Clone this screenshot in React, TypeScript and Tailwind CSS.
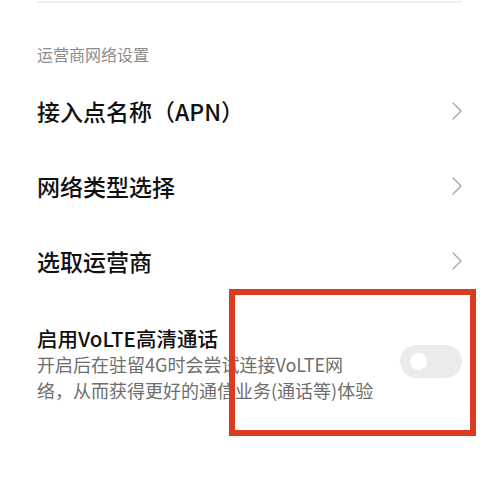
const Chevron = () => (
  <svg width="10" height="18" viewBox="0 0 10 18" fill="none" className="shrink-0">
    <polyline points="1,1 9,9 1,17" stroke="#a3a3a3" strokeWidth="1.3" strokeLinecap="round" strokeLinejoin="round" />
  </svg>
);

const NavRow = ({ title }: { title: string }) => (
  <div className="flex h-[75px] items-center justify-between">
    <span className="text-[23px] leading-[26px] font-medium text-[#111]">{title}</span>
    <Chevron />
  </div>
);

export default function App() {
  return (
    <div
      className="relative h-[478px] w-[499px] overflow-hidden bg-white"
      style={{ fontFamily: '"Noto Sans CJK SC", "Noto Sans", sans-serif' }}
    >
      <div className="px-[37px] pt-[1px]">
        <div className="h-[2px] bg-[#efefef]" />

        <div className="mt-[43px] mb-[11px] text-[16px] leading-[16px] text-[#8c8c8c]">运营商网络设置</div>

        <NavRow title="接入点名称（APN）" />
        <NavRow title="网络类型选择" />
        <NavRow title="选取运营商" />

        <div className="mt-[27px] flex items-center justify-between">
          <div>
            <div className="text-[20.5px] leading-[26px] font-medium text-[#111]">启用VoLTE高清通话</div>
            <div className="text-[18px] leading-[26px] text-[#6e6e6e]">
              开启后在驻留4G时会尝试连接VoLTE网
              <br />
              络，从而获得更好的通信业务(通话等)体验
            </div>
          </div>
          <div className="mt-[-6px] flex h-[33px] w-[62px] shrink-0 items-center rounded-full bg-[#ebebeb] pl-[10px]">
            <div className="h-[17px] w-[17px] rounded-full bg-white" />
          </div>
        </div>
      </div>

      <div className="absolute left-[229px] top-[289px] h-[147px] w-[247px] border-[6px] border-[#dc3b1f]" />
    </div>
  );
}
